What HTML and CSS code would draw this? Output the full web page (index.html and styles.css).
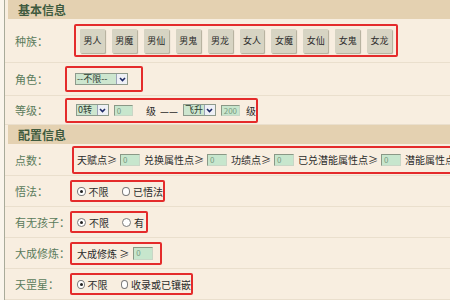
FILE: index.html
```html
<!DOCTYPE html>
<html lang="zh-CN">
<head>
    <meta charset="UTF-8">
    <title>角色搜索</title>
    <link rel="stylesheet" href="styles.css">
</head>
<body>
    <div class="panel">
        <div class="section-title">基本信息</div>

        <div class="row row-race">
            <div class="label">种族：</div>
            <div class="box box-race">
                <span class="race-btn">男人</span>
                <span class="race-btn">男魔</span>
                <span class="race-btn">男仙</span>
                <span class="race-btn">男鬼</span>
                <span class="race-btn">男龙</span>
                <span class="race-btn">女人</span>
                <span class="race-btn">女魔</span>
                <span class="race-btn">女仙</span>
                <span class="race-btn">女鬼</span>
                <span class="race-btn">女龙</span>
            </div>
        </div>

        <div class="row row-role">
            <div class="label">角色：</div>
            <div class="box box-role">
                <span class="select select-role">
                    <span class="select-text">--不限--</span>
                    <span class="select-arrow"><svg width="7" height="5" viewBox="0 0 7 5"><path d="M1 1l2.5 2.5L6 1" fill="none" stroke="#1d2a66" stroke-width="1.6"/></svg></span>
                </span>
            </div>
        </div>

        <div class="row row-level">
            <div class="label">等级：</div>
            <div class="box box-level">
                <span class="select select-small">
                    <span class="select-text">0转</span>
                    <span class="select-arrow"><svg width="7" height="5" viewBox="0 0 7 5"><path d="M1 1l2.5 2.5L6 1" fill="none" stroke="#1d2a66" stroke-width="1.6"/></svg></span>
                </span>
                <span class="input input-level">0</span>
                <span class="text text-ji">级</span>
                <span class="text text-dash">— —</span>
                <span class="select select-small">
                    <span class="select-text">飞升</span>
                    <span class="select-arrow"><svg width="7" height="5" viewBox="0 0 7 5"><path d="M1 1l2.5 2.5L6 1" fill="none" stroke="#1d2a66" stroke-width="1.6"/></svg></span>
                </span>
                <span class="input input-level">200</span>
                <span class="text text-ji-end">级</span>
            </div>
        </div>

        <div class="section-title">配置信息</div>

        <div class="row row-points">
            <div class="label">点数：</div>
            <div class="box box-points">
                <span class="text">天赋点≥</span>
                <span class="input input-point">0</span>
                <span class="text">兑换属性点≥</span>
                <span class="input input-point">0</span>
                <span class="text">功绩点≥</span>
                <span class="input input-point">0</span>
                <span class="text">已兑潜能属性点≥</span>
                <span class="input input-point">0</span>
                <span class="text">潜能属性点</span>
            </div>
        </div>

        <div class="row">
            <div class="label">悟法：</div>
            <div class="box box-radio box-wufa">
                <span class="radio checked"></span><span class="text">不限</span>
                <span class="radio"></span><span class="text">已悟法</span>
            </div>
        </div>

        <div class="row">
            <div class="label">有无孩子：</div>
            <div class="box box-radio box-child">
                <span class="radio checked"></span><span class="text">不限</span>
                <span class="radio"></span><span class="text">有</span>
            </div>
        </div>

        <div class="row">
            <div class="label">大成修炼：</div>
            <div class="box box-radio box-train">
                <span class="text">大成修炼 ≥</span>
                <span class="input input-train">0</span>
            </div>
        </div>

        <div class="row">
            <div class="label">天罡星：</div>
            <div class="box box-radio box-star">
                <span class="radio checked"></span><span class="text">不限</span>
                <span class="radio"></span><span class="text">收录或已镶嵌</span>
            </div>
        </div>
    </div>
</body>
</html>
```

FILE: styles.css
```css
body {
    margin: 0;
    background-color: #faf5ec;
    font-family: "Noto Sans CJK SC", "Noto Sans", sans-serif;
    font-size: 10px;
    color: #2b2b2b;
}

.panel {
    margin-left: 4px;
    height: 300px;
    overflow: hidden;
    border-left: 1px solid #a9ab9a;
    background-color: #f8eee0;
}

.section-title {
    margin-left: 3px;
    height: 19px;
    line-height: 19px;
    padding-left: 10px;
    background-color: #e4d1b1;
    font-size: 12px;
    font-weight: bold;
    color: #3f5b3e;
}

.row {
    display: flex;
    align-items: center;
    box-sizing: border-box;
    height: 31px;
    border-bottom: 1px solid #eadfcd;
    white-space: nowrap;
}

.row-race { height: 44px; }
.row-role { height: 33px; }
.row-level { height: 29px; }
.row-points { height: 32px; }

.label {
    flex-shrink: 0;
    width: 60px;
    box-sizing: border-box;
    padding-left: 10px;
    font-size: 11px;
    color: #5a7b5b;
}

.box {
    display: flex;
    align-items: center;
    flex-shrink: 0;
    box-sizing: border-box;
    border: 2px solid #e42b2b;
    border-radius: 2px;
}

.box-race {
    margin-left: 9px;
    width: 324px;
    height: 33px;
    padding: 0 4px;
    gap: 7px;
}

.race-btn {
    width: 25px;
    height: 24px;
    line-height: 24px;
    text-align: center;
    background-color: #d7d4c3;
    border-radius: 1px;
    box-shadow: 1px 1px 1px #b1ac99;
    font-size: 9px;
    color: #2a2a2a;
}

.box-role {
    width: 78px;
    height: 26px;
    padding-left: 8px;
}

.box-level {
    width: 193px;
    height: 25px;
    padding-left: 9px;
}

.select {
    display: flex;
    align-items: center;
    box-sizing: border-box;
    height: 12px;
    border: 1px solid #8e9a8c;
    background-color: #cde6cf;
}

.select-role { width: 53px; }
.select-small { width: 34px; }

.select-text {
    flex: 1;
    padding-left: 1px;
    font-size: 9px;
    line-height: 10px;
    color: #2e3b2e;
}

.select-arrow {
    display: flex;
    align-items: center;
    justify-content: center;
    width: 10px;
    height: 10px;
    background-color: #eef0f6;
    border-left: 1px solid #9aa3b8;
}

.input {
    box-sizing: border-box;
    height: 11px;
    padding-left: 2px;
    border: 1px solid #8a9886;
    border-right-color: #c9d6c6;
    border-bottom-color: #c9d6c6;
    background-color: #c7e6cd;
    font-size: 8px;
    line-height: 9px;
    color: #7a9a80;
}

.input-level {
    width: 20px;
    margin-left: 5px;
}

.text-ji { margin-left: 13px; }
.text-ji-end { margin-left: 6px; }

.text-dash {
    margin: 0 6px 0 4px;
    letter-spacing: -1px;
}

.box-points {
    margin-left: 7px;
    width: 400px;
    height: 28px;
    padding-left: 3px;
}

.input-point {
    width: 20px;
    height: 12px;
    margin: 0 4px 0 3px;
}

.box-radio {
    margin-left: 5px;
    height: 22px;
    padding-left: 5px;
}

.box-wufa { width: 95px; }
.box-child { width: 78px; }
.box-train { width: 92px; height: 23px; }
.box-star { width: 123px; }

.radio {
    position: relative;
    width: 7px;
    height: 7px;
    margin-right: 3px;
    border: 1px solid #7b7b7b;
    border-radius: 50%;
    background-color: #fff;
}

.radio.checked::after {
    content: "";
    position: absolute;
    left: 2px;
    top: 2px;
    width: 3px;
    height: 3px;
    border-radius: 50%;
    background-color: #222;
}

.radio + .text + .radio {
    margin-left: 13px;
}

.input-train {
    width: 20px;
    height: 13px;
    margin-left: 4px;
}
```
